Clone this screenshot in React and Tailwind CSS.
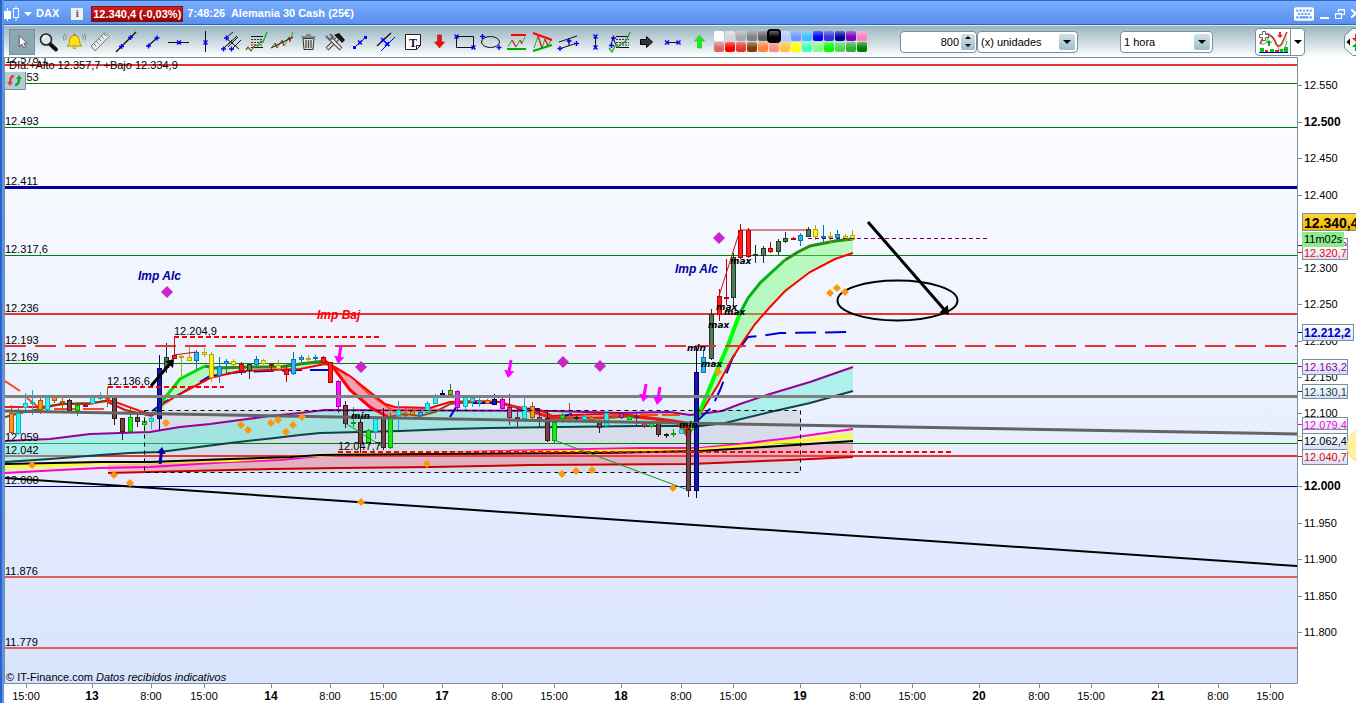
import { FaKeyboard } from 'react-icons/fa'

const BLUE = '#0000ff'

// Small blue handle used by most of the drawing tools
function Cross({ x, y, plus }) {
  return (
    <path
      d={plus ? `M${x - 2.5} ${y}h5M${x} ${y - 2.5}v5` : `M${x - 2} ${y - 2}l4 4M${x + 2} ${y - 2}l-4 4`}
      stroke={BLUE}
      strokeWidth="1.4"
    />
  )
}

const tools = [
  {
    name: 'Seleccionar',
    active: true,
    icon: <path d="M10 6v12l3-2.500 2 4 2-1-2-4h3.500z" fill="#fff" stroke="#555" />,
  },
  {
    name: 'Zoom',
    icon: (
      <>
        <path d="M15 15l6 5.500" stroke="#111" strokeWidth="4" strokeLinecap="round" />
        <circle cx="11" cy="10.500" r="5.500" fill="#dde5ea" stroke="#222" strokeWidth="1.600" />
        <path d="M8 10a3.500 3.500 0 0 1 3-3" stroke="#fff" strokeWidth="1.500" />
      </>
    ),
  },
  {
    name: 'Alerta',
    icon: (
      <>
        <path d="M6 17c3-2 2-5 3-7.500 1-2.500 3-3 4.500-3s3.500.500 4.500 3c1 2.500 0 5.500 3 7.500z" fill="#ffe11a" stroke="#a98a00" />
        <path d="M11 18.500h5l-2.500 2z" fill="#caa500" />
        <path d="M13.500 6.500v-2" stroke="#a98a00" strokeWidth="2" />
        <path d="M6 5.500q-2 2-1 5M4 4.500q-3 3-1 7M21 5.500q2 2 1 5M23 4.500q3 3 1 7" stroke="#777" strokeWidth=".8" />
      </>
    ),
  },
  {
    name: 'Regla',
    icon: (
      <>
        <path d="M4 17L18 3.500l4 4L8 22z" fill="#e8e8e8" stroke="#777" />
        <path d="M7 15l2 2M9.500 12.500l2 2M12 10l2 2M14.500 7.500l2 2M17 5l2 2" stroke="#666" />
      </>
    ),
  },
  {
    name: 'Línea de tendencia',
    icon: <><path d="M3 23L23 3" stroke="#111" strokeWidth="1.400" /><Cross x={8.5} y={17.5} plus /><Cross x={17.5} y={8.5} plus /></>,
  },
  {
    name: 'Segmento',
    icon: <><path d="M9 17l9-8" stroke="#111" strokeWidth="1.400" /><Cross x={9.5} y={17} plus /><Cross x={18} y={9} plus /></>,
  },
  {
    name: 'Línea horizontal',
    icon: <><path d="M3 13.500h21" stroke="#111" /><Cross x={14} y={13.5} /></>,
  },
  {
    name: 'Línea vertical',
    icon: <><path d="M14.500 2v21" stroke="#111" /><Cross x={14.5} y={13.5} /></>,
  },
  {
    name: 'Tridente',
    icon: (
      <>
        <path d="M6 20l9-9M9 9l13 11M15 20L24 11M11 18L21 8M9 9l7-6M6 20L20 7" stroke="#111" />
        <Cross x={6.5} y={20} plus /><Cross x={14.5} y={20} plus /><Cross x={9.5} y={9} plus />
      </>
    ),
  },
  {
    name: 'Retrocesos',
    icon: (
      <>
        <path d="M8 7.500h12M8 18.500h12" stroke="#111" />
        <path d="M8 10.500h12M8 13.500h12M8 16h12" stroke="#333" strokeDasharray="2 1" />
        <path d="M3 21l2-3 3 4 4-6 3 1 3-5 2 1 4-10" stroke="#22a522" strokeWidth="1.300" />
        <path d="M3 21l2-3 3 4M10 19l3-4" stroke="#e22" />
      </>
    ),
  },
  {
    name: 'Regresión',
    icon: (
      <>
        <path d="M3 18l3-4 2 5 5-8 2 6 5-9 1 4 3-9" stroke="#22a522" />
        <path d="M6 14l2 5M13 11l2 6M20 8l1 5" stroke="#e22" strokeWidth="1.300" />
        <path d="M2 19L24 8" stroke="#111" />
      </>
    ),
  },
  {
    name: 'Borrar',
    icon: (
      <>
        <path d="M8 9.500h11l-1 11h-9z" fill="#ddd" stroke="#333" />
        <path d="M6.500 8h14M11 6h5M11 11v8M13.500 11v8M16 11v8" stroke="#444" strokeWidth="1.200" />
      </>
    ),
  },
  {
    name: 'Herramientas',
    icon: (
      <>
        <path d="M6 20l11-11" stroke="#444" strokeWidth="4" />
        <path d="M6.500 19.500l10-10" stroke="#e6e6e6" strokeWidth="2" />
        <path d="M9 9l11 11" stroke="#444" strokeWidth="4" />
        <path d="M9 9l10.500 10.500" stroke="#f4f4f4" strokeWidth="2" />
        <path d="M5 7l4 4 3-3-3-3" stroke="#666" strokeWidth="2" />
        <path d="M13 6l5-2 6 7-3 3-4-5z" fill="#111" />
      </>
    ),
  },
  {
    name: 'Puntos',
    icon: (
      <>
        <path d="M8 18L19 8" stroke="#111" />
        <path d="M6 17h3v3H6zM17 7h3v3h-3z" fill={BLUE} />
        <Cross x={13} y={13.5} />
      </>
    ),
  },
  {
    name: 'Paralelas',
    icon: (
      <>
        <path d="M4 17L18 4" stroke="#111" strokeWidth="1.300" />
        <path d="M8 22L22 8M9 10l8 7" stroke={BLUE} />
        <Cross x={10} y={11} /><Cross x={14} y={15} />
      </>
    ),
  },
  {
    name: 'Texto',
    icon: (
      <>
        <path d="M6.500 5.500h15v11l-4 4h-11z" fill="#fff" stroke="#222" />
        <path d="M21.500 16.500h-4v4" stroke="#222" />
        <text x="14" y="18" textAnchor="middle" fontSize="12" fontWeight="bold" fontFamily="Liberation Serif, serif" fill="#111">T</text>
      </>
    ),
  },
  { name: 'Flecha roja', icon: <path d="M12.500 6h4v7h3l-5 6-5-6h3z" fill="#ef1010" stroke="#b00" strokeWidth=".6" /> },
  {
    name: 'Rectángulo',
    icon: <><path d="M5.500 7.500h17v11h-17z" stroke="#111" /><Cross x={5.5} y={7.5} /><Cross x={22.5} y={18.5} /></>,
  },
  {
    name: 'Elipse',
    icon: <><ellipse cx="13.500" cy="13" rx="9" ry="5.500" stroke="#111" /><Cross x={5.5} y={7.5} plus /><Cross x={22} y={18.5} plus /></>,
  },
  {
    name: 'Soporte y resistencia',
    icon: (
      <>
        <path d="M5 18l4-7 4 7 4-7 2 3 3-6" stroke="#2a2" />
        <path d="M9 11l4 7M17 11l2 4" stroke="#e22" strokeWidth="1.400" />
        <path d="M8 6h15" stroke="#f00" strokeWidth="2" />
        <path d="M4 20h19" stroke="#0a0" strokeWidth="2" />
      </>
    ),
  },
  {
    name: 'Triángulo',
    icon: (
      <>
        <path d="M5 19l4-12 4 12 3-9 3 7 3-6" stroke="#2a2" />
        <path d="M9 7l4 12M16 10l3 7" stroke="#e22" strokeWidth="1.400" />
        <path d="M4 4l19 7" stroke="#f00" strokeWidth="2" />
        <path d="M4 22l19-6" stroke="#0a0" strokeWidth="2" />
      </>
    ),
  },
  {
    name: 'Canal',
    icon: (
      <>
        <path d="M4 13l18-6M4 20l18-6M14 10v7" stroke="#111" />
        <Cross x={5} y={19.5} plus /><Cross x={14} y={12} plus /><Cross x={21.5} y={14.5} plus />
      </>
    ),
  },
  {
    name: 'Medida vertical',
    icon: <><path d="M14.500 7v12" stroke="#111" /><Cross x={14.5} y={7.5} /><Cross x={14.5} y={18.5} /></>,
  },
  {
    name: 'Proyección',
    icon: (
      <>
        <path d="M9 7.500h13M9 18.500h13" stroke="#111" />
        <path d="M9 10.500h13M9 13.500h13M9 16h13" stroke="#333" strokeDasharray="2 1" />
        <path d="M2 19l3 4 3-6 3 1 3-3 3-1 3-4 3-7" stroke="#22a522" strokeWidth="1.300" />
        <path d="M4 16l2-7 3 7" stroke="#111" />
        <Cross x={4.5} y={16.5} plus /><Cross x={6.5} y={9} plus />
      </>
    ),
  },
  { name: 'Flecha', icon: <path d="M7.500 10.500h6v-3l6 5.500-6 5.500v-3h-6z" fill="#333" stroke="#000" /> },
  {
    name: 'Medida horizontal',
    icon: <><path d="M8 13.500h12" stroke="#111" /><Cross x={8} y={13.5} /><Cross x={19.5} y={13.5} /></>,
  },
  { name: 'Flecha verde', icon: <path d="M12.500 19h4v-7h3l-5-6-5 6h3z" fill="#22e622" stroke="#1c1" strokeWidth=".6" /> },
]

const palette = [
  '#ffffff', '#d4d4d4', '#a8a8a8', '#808080', '#606060', '#000000', '#b4c8ff',
  '#6699ff', '#40bfff', '#0000ff', '#3333d9', '#0000a0', '#8000c0', '#ff80c0',
  '#e06666', '#ff0000', '#e63333', '#804000', '#ff8040', '#ff8f80', '#ffbf40',
  '#ffff00', '#40ffc0', '#80ff80', '#00ff00', '#50d850', '#30b030', '#008000',
]

// fill, outline
const inks = {
  o: ['#ff9320', '#a85a00'],
  c: ['#28f4f4', '#12b5b8'],
  k: ['#6e4646', '#3a1418'],
  g: ['#16ee16', '#0a9a0a'],
  G: ['#56785a', '#1c3a20'],
  n: ['#1818a8', '#000060'],
  r: ['#ff1e1e', '#b80000'],
  y: ['#fff01e', '#b8a800'],
  b: ['#30b4ee', '#0878a8'],
  m: ['#ff14ff', '#b400b4'],
  p: ['#c83c82', '#781848'],
  v: ['#8cb43c', '#486e14'],
}

// x, high, body top, body bottom, low, ink
const candles = [
  [11, 405, 413, 432, 434, 'o'], [18, 408, 413, 433, 435, 'c'], [25, 393, 403, 407, 410, 'c'],
  [32, 390, 402, 403, 415, 'c'], [40, 397, 400, 409, 414, 'o'], [47, 397, 397, 409, 412, 'c'],
  [54, 396, 397, 400, 403, 'o'], [62, 397, 401, 402, 411, 'o'], [69, 399, 400, 410, 413, 'k'],
  [77, 402, 405, 410, 416, 'g'], [85, 403, 405, 406, 407, 'p'], [92, 396, 397, 403, 405, 'c'],
  [100, 392, 397, 398, 400, 'c'], [107, 387, 397, 398, 407, 'o'], [114, 396, 397, 418, 425, 'k'],
  [122, 418, 418, 431, 440, 'k'], [130, 408, 417, 431, 433, 'g'], [137, 413, 417, 421, 427, 'k'],
  [144, 417, 421, 424, 433, 'g'], [151, 416, 418, 421, 429, 'c'], [159, 355, 368, 418, 430, 'n'],
  [166, 343, 357, 367, 373, 'G'], [174, 337, 355, 358, 359, 'r'], [181, 355, 356, 357, 376, 'y'],
  [189, 347, 357, 360, 361, 'y'], [196, 350, 352, 360, 370, 'b'], [204, 348, 352, 354, 357, 'y'],
  [211, 352, 354, 377, 382, 'y'], [219, 357, 366, 375, 383, 'b'], [226, 359, 361, 363, 373, 'b'],
  [233, 359, 361, 364, 366, 'y'], [241, 362, 364, 370, 375, 'r'], [249, 364, 364, 370, 379, 'G'],
  [256, 356, 359, 364, 366, 'b'], [263, 359, 360, 363, 365, 'y'], [271, 363, 364, 365, 372, 'r'],
  [278, 360, 365, 368, 370, 'y'], [286, 365, 369, 374, 382, 'r'], [293, 352, 359, 373, 375, 'b'],
  [301, 355, 357, 359, 362, 'b'], [308, 355, 358, 359, 361, 'y'], [315, 355, 357, 358, 361, 'b'],
  [323, 356, 357, 362, 363, 'r'], [330, 362, 362, 382, 383, 'r'], [338, 380, 381, 406, 413, 'm'],
  [345, 401, 405, 423, 428, 'k'], [353, 407, 422, 423, 427, 'g'], [360, 418, 422, 443, 453, 'k'],
  [368, 429, 430, 443, 445, 'g'], [375, 417, 418, 431, 439, 'c'], [383, 408, 417, 447, 450, 'k'],
  [390, 413, 417, 447, 449, 'g'], [398, 401, 410, 415, 430, 'c'], [405, 408, 414, 415, 418, 'o'],
  [412, 406, 411, 414, 416, 'o'], [420, 409, 412, 415, 416, 'b'], [427, 401, 403, 412, 414, 'c'],
  [435, 394, 397, 403, 404, 'c'], [442, 390, 393, 394, 397, 'n'], [450, 384, 390, 394, 396, 'v'],
  [457, 390, 391, 407, 410, 'm'], [465, 395, 397, 406, 412, 'c'], [472, 396, 398, 401, 407, 'c'],
  [479, 398, 401, 402, 407, 'c'], [487, 399, 400, 403, 404, 'o'], [494, 394, 399, 404, 405, 'n'],
  [502, 397, 399, 408, 410, 'm'], [509, 394, 407, 417, 425, 'p'], [517, 408, 417, 418, 428, 'p'],
  [524, 397, 406, 418, 419, 'c'], [532, 402, 406, 417, 420, 'o'], [539, 408, 417, 419, 427, 'p'],
  [547, 410, 418, 440, 442, 'k'], [554, 420, 422, 440, 444, 'g'], [562, 413, 415, 418, 423, 'g'],
  [569, 403, 417, 418, 423, 'o'], [576, 416, 417, 418, 420, 'k'], [584, 414, 416, 419, 420, 'c'],
  [591, 416, 417, 419, 420, 'o'], [599, 420, 422, 427, 433, 'k'], [606, 411, 413, 425, 427, 'c'],
  [614, 414, 416, 417, 419, 'o'], [621, 412, 413, 417, 419, 'p'], [629, 414, 416, 419, 420, 'g'],
  [636, 413, 416, 417, 427, 'p'], [644, 422, 423, 426, 428, 'p'], [651, 422, 423, 426, 428, 'g'],
  [658, 422, 423, 434, 437, 'k'], [666, 433, 434, 435, 438, 'k'], [673, 429, 433, 434, 437, 'g'],
  [681, 428, 429, 433, 434, 'c'], [688, 428, 429, 490, 497, 'k'], [696, 347, 372, 490, 498, 'n'],
  [703, 350, 357, 372, 373, 'b'], [711, 309, 314, 358, 360, 'G'], [719, 289, 296, 314, 321, 'r'],
  [726, 259, 297, 298, 305, 'r'], [733, 253, 257, 297, 307, 'G'], [740, 224, 230, 257, 259, 'r'],
  [748, 228, 230, 256, 258, 'r'], [755, 245, 254, 255, 263, 'G'], [763, 246, 248, 255, 263, 'G'],
  [770, 242, 248, 251, 253, 'r'], [778, 239, 241, 251, 255, 'G'], [785, 232, 238, 241, 243, 'G'],
  [793, 237, 238, 239, 240, 'r'], [800, 233, 235, 240, 246, 'b'], [808, 227, 229, 236, 237, 'G'],
  [815, 225, 229, 236, 240, 'y'], [823, 225, 236, 237, 242, 'b'], [830, 232, 236, 237, 243, 'y'],
  [837, 230, 234, 237, 240, 'b'], [845, 234, 236, 238, 241, 'y'], [852, 230, 235, 239, 241, 'y'],
]

// y, color, width, label, label baseline
const levels = [
  [65, '#e63333', 2, '12.578,1', 63],
  [83, '#008000', 1, '12.553', 81],
  [127, '#008000', 1, '12.493', 125],
  [187, '#0000a0', 3, '12.411', 185],
  [255, '#008000', 1, '12.317,6', 253],
  [314, '#e63333', 2, '12.236', 312],
  [363, '#008000', 1, '12.169', 361],
  [443, '#008000', 1, '12.059', 441],
  [456, '#e63333', 2, '12.042', 454],
  [486, '#0000a0', 1, '12.000', 484],
  [577, '#e06060', 2, '11.876', 575],
  [648, '#e06060', 2, '11.779', 646],
]

const priceTicks = [
  [85, '12.550'], [122, '12.500', true], [158, '12.450'], [195, '12.400'], [268, '12.300'],
  [304, '12.250'], [341, '12.200'], [377, '12.150'], [413, '12.100'], [486, '12.000', true],
  [523, '11.950'], [559, '11.900'], [596, '11.850'], [632, '11.800'],
]

const timeTicks = [
  [26, '15:00'], [92, '13', true], [151, '8:00'], [204, '15:00'], [271, '14', true], [330, '8:00'],
  [383, '15:00'], [442, '17', true], [502, '8:00'], [554, '15:00'], [621, '18', true], [681, '8:00'],
  [733, '15:00'], [800, '19', true], [860, '8:00'], [912, '15:00'], [979, '20', true], [1039, '8:00'],
  [1091, '15:00'], [1158, '21', true], [1218, '8:00'], [1270, '15:00'],
]

// y, height, width, text, color, background
const priceTags = [
  [238, 16, 45, '12.340,0', '#660066', 'url(#tag)'],
  [245, 14, 45, '12.320,7', '#ff0000', 'url(#tag)'],
  [359, 15, 45, '12.163,2', '#990099', 'url(#tag)'],
  [384, 14, 45, '12.130,1', '#1e4646', 'url(#tag)'],
  [417, 15, 45, '12.079,4', '#ff00dc', 'url(#tag)'],
  [429, 15, 45, '12.067,0', '#e6e600', 'url(#tag)'],
  [433, 16, 45, '12.062,4', '#000000', 'url(#tag)'],
  [449, 15, 45, '12.040,7', '#e60000', 'url(#tag)'],
]

const purpleDiamonds = [[167, 292], [361, 367], [563, 362], [600, 366], [719, 238]]

const orangeDiamonds = [
  [32, 465], [114, 475], [130, 483], [166, 423], [241, 425], [248, 430], [271, 423], [278, 420],
  [286, 432], [293, 425], [302, 417], [361, 502], [427, 464], [562, 474], [576, 471], [592, 470],
  [673, 488], [718, 372], [830, 293], [837, 288], [845, 292],
]

const marks = [
  [730, 264, 'max'], [716, 310, 'max'], [724, 315, 'max'], [708, 328, 'max'], [701, 367, 'max'],
  [687, 351, 'min'], [679, 428, 'min'], [351, 419, 'min'],
]

const purple = '5,441 50,439 90,434 150,432 180,427 210,424 240,420 270,416 300,413 325,410 555,411 620,413 670,412 690,415 700,414 722,411 740,404 770,394 810,382 853,367'
const teal = '5,462 50,459 100,455 130,453 160,452 230,443 275,438 300,435 320,433 400,431 450,429 490,428 560,427 640,426 700,426 725,423 770,412 810,403 853,391'
const tealBack = '853,391 810,403 770,412 725,423 700,426 640,426 560,427 490,428 450,429 400,431 320,433 300,435 275,438 230,443 160,452 130,453 100,455 50,459 5,462'
const magenta = '5,473 60,470 100,468 150,467 230,462 280,460 330,455 430,453 500,451 640,448 700,448 740,444 790,438 853,429'
const yellow = '5,467 50,465 100,463 230,461 290,457 360,454 500,452 640,450 690,450 760,444 810,440 853,436'
const black = '5,464 100,462 150,462 230,459 290,457 320,455 430,454 600,453 700,451 780,446 853,441'
const blackBack = '853,441 780,446 700,451 600,453 430,454 320,455 290,457 230,459 150,462 100,462 5,464'
const lowRed = '108,473 230,470 270,469 340,468 430,467 530,465 690,464 740,462 790,460 853,457'

function Diamond({ x, y, r, fill }) {
  return <path d={`M${x} ${y - r}l${r} ${r}l${-r} ${r}l${-r} ${-r}z`} fill={fill} />
}

function Arrow({ x1, y1, x2, y2, color, width = 3, head = 7 }) {
  const a = Math.atan2(y2 - y1, x2 - x1)
  const side = turn => `${x2 - head * Math.cos(a + turn)},${y2 - head * Math.sin(a + turn)}`
  return (
    <g>
      <line x1={x1} y1={y1} x2={x2 - 3 * Math.cos(a)} y2={y2 - 3 * Math.sin(a)} stroke={color} strokeWidth={width} />
      <polygon points={`${x2},${y2} ${side(0.6)} ${side(-0.6)}`} fill={color} />
    </g>
  )
}

function Candle({ x, high, top, bottom, low, ink }) {
  const [fill, line] = inks[ink]
  return (
    <g shapeRendering="crispEdges">
      <rect x={x} y={high} width="1" height={low - high} fill={line} />
      <rect x={x - 2} y={top} width="5" height={bottom - top + 1} fill={line} />
      {bottom - top > 1 && <rect x={x - 1} y={top + 1} width="3" height={bottom - top - 1} fill={fill} />}
    </g>
  )
}

function Indicators() {
  return (
    <g fill="none" strokeWidth="2">
      <polygon points={`${purple} ${tealBack}`} fill="#50f0d2" fillOpacity=".38" />
      <polygon points={`${magenta} ${blackBack}`} fill="#f5f03c" fillOpacity=".4" />
      <polygon points={`${lowRed} ${blackBack.replace('100,462 5,464', '108,465')}`} fill="#ff5064" fillOpacity=".3" />
      <polyline points={teal} stroke="#0a4646" />
      <polyline points={purple} stroke="#960096" />
      <polyline points={magenta} stroke="#ff00d2" />
      <polyline points={yellow} stroke="#ffff00" />
      <polyline points={black} stroke="#000" />
      <polyline points={lowRed} stroke="#c80000" />

      {/* fast average channel */}
      <polygon points="155,415 163,400 180,379 205,366 215,369 250,367 280,367 325,361 333,367 325,364 300,369 240,371 210,379 180,394" fill="#64ff64" fillOpacity=".4" />
      <polygon points="333,366 350,376 385,403 395,408 440,408 385,416 370,407 350,390" fill="#ff5078" fillOpacity=".5" />
      <polygon points="692,425 718,368 740,313 760,283 785,260 810,246 835,241 853,239 853,253 835,259 810,272 770,307 740,346 718,385" fill="#64ff64" fillOpacity=".4" />
      <polyline points="5,381 20,391" stroke="#ff4614" />
      <polyline points="27,398 38,407" stroke="#ff4614" />
      <path d="M54 409h21M83 409h21M334 367l14 9M356 382l13 12 26 18" stroke="#ff4614" />
      <polyline points="5,407 40,407 65,404 90,404 108,400 118,403 140,411 152,414" stroke="#ff1414" />
      <polyline points="108,402 125,410 152,416" stroke="#c81414" />
      <polyline points="5,417 20,413 40,409 60,404 90,403 108,401" stroke="#823c14" />
      <polyline points="152,411 163,403 180,394 210,376 240,372 300,370 328,370" stroke="#0000d2" strokeDasharray="20 8" />
      <polyline points="152,416 163,404 180,394 210,378 240,371 300,369 325,364 333,366 350,376 385,404 395,407 430,408 450,402 475,401 500,402 515,407 540,410 552,416 600,414 630,415 670,420 690,423" stroke="#ff0000" />
      <polyline points="155,414 163,400 180,379 205,366" stroke="#00dc00" strokeWidth="3" />
      <polyline points="205,366 215,368 250,367 280,367 300,364 325,361" stroke="#288c14" strokeWidth="3" />
      <polyline points="325,361 333,367 350,390 370,407 388,417" stroke="#ff0000" strokeWidth="3" />
      <polyline points="388,417 405,414 420,416 435,412 450,404 475,402" stroke="#965014" />
      <path d="M450 417L458 404M472 403h22M517 409h22M560 417l12-3" stroke="#0000d2" />
      <polyline points="500,403 520,408 540,414 552,418 600,418 625,416 655,419 678,423 688,436" stroke="#e61e14" strokeWidth="3" />
      <path d="M603 415h20M640 415h18M662 415h18" stroke="#ff4614" />
      <polygon points="681,426 694,426 688,441" fill="#f03214" />
      <polyline points="695,423 712,407 720,390 733,357 748,337 760,336 780,333 853,332" stroke="#0000d2" strokeDasharray="21 9" />
      <polyline points="692,427 700,414 718,385 730,362 740,346 755,324 770,307 785,291 810,272 835,259 853,253" stroke="#ff0000" />
      <polyline points="692,430 703,404 718,368 728,345 740,313" stroke="#00ff00" strokeWidth="4" />
      <polyline points="739,315 748,298 760,283 785,260" stroke="#00b414" strokeWidth="3" />
      <polyline points="785,260 798,252 810,246 835,241 853,239" stroke="#288c14" strokeWidth="3" />
    </g>
  )
}

function Plot() {
  return (
    <g clipPath="url(#plot)">
      <rect x="5" y="58" width="1292" height="625" fill="url(#sky)" />
      <rect x="144" y="410" width="656" height="62" fill="#808080" fillOpacity=".16" />
      {levels.map(([y, color, width]) => (
        <rect key={y} x="5" y={width > 1 ? y - 1 : y} width="1292" height={width} fill={color} />
      ))}
      <Indicators />
      {candles.map(([x, high, top, bottom, low, ink]) => (
        <Candle key={x} x={x} high={high} top={top} bottom={bottom} low={low} ink={ink} />
      ))}

      <g fill="none">
        <path d="M5 346h1292" stroke="#e63333" strokeWidth="2" strokeDasharray="21 9" />
        <path d="M174 337h206M108 387h116M338 452h615" stroke="#ff0000" strokeWidth="2" strokeDasharray="5 3" />
        <path d="M174.500 337v18M174 355l22-3M719 296l21-66h68" stroke="#be1414" />
        <path d="M345 423l38 24M554 440l134 50" stroke="#149614" />
        <path d="M144.500 410.500h656v62h-656z" stroke="#000" strokeDasharray="4 4" />
        <path d="M808 238.500h179" stroke="#660066" strokeDasharray="4 3" />
        <path d="M5 396.500h1292" stroke="#808080" strokeWidth="3" />
        <path d="M5 411l1292 23" stroke="#646464" strokeWidth="3" />
        <path d="M5 478l1292 88" stroke="#000" strokeWidth="2" />
        <ellipse cx="897.500" cy="300.500" rx="60" ry="20" stroke="#000" strokeWidth="2" />
      </g>

      {purpleDiamonds.map(([x, y]) => <Diamond key={x} x={x} y={y} r={6} fill="#c828c8" />)}
      {orangeDiamonds.map(([x, y]) => <Diamond key={x} x={x} y={y} r={4} fill="#ff960a" />)}

      <Arrow x1={868} y1={222} x2={949} y2={315} color="#000" head={10} />
      <Arrow x1={151} y1={386} x2={174} y2={359} color="#000" head={9} />
      <Arrow x1={160} y1={464} x2={162} y2={447} color="#0000a0" head={8} />
      <Arrow x1={341} y1={346} x2={338} y2={364} color="#ff00ff" head={9} />
      <Arrow x1={511} y1={360} x2={508} y2={378} color="#ff00ff" head={9} />
      <Arrow x1={646} y1={384} x2={643} y2={402} color="#ff00ff" head={9} />
      <Arrow x1={660} y1={387} x2={657} y2={405} color="#ff00ff" head={9} />

      {levels.map(([, , , label, y]) => <text key={label} x="5" y={y}>{label}</text>)}
      <text x="5" y="344">12.193</text>
      <text x="174" y="335">12.204,9</text>
      <text x="107" y="385">12.136,6</text>
      <text x="338" y="450">12.047,7</text>
      <text x="9" y="69">Día:+Alto 12.357,7 +Bajo 12.334,9</text>
      <text x="6" y="681">© IT-Finance.com</text>
      <text x="96" y="681" fontStyle="italic">Datos recibidos indicativos</text>
      <g fontSize="12" fontWeight="bold" fontStyle="italic">
        <text x="138" y="280" fill="#0000a0">Imp Alc</text>
        <text x="675" y="273" fill="#0000a0">Imp Alc</text>
        <text x="317" y="319" fill="#ff0000">Imp Baj</text>
      </g>
      <g fontSize="9" fontWeight="bold" fontStyle="italic" fontFamily="DejaVu Sans, sans-serif">
        {marks.map(([x, y, text]) => <text key={`${x}-${y}`} x={x} y={y}>{text}</text>)}
      </g>

      {/* refresh button in the corner */}
      <rect x="5" y="72" width="21" height="18" fill="#b4ccd6" />
      <path d="M5 89.500h20.500V72" stroke="#78909c" fill="none" />
      <path d="M14 76q-4 0-4 7" stroke="#e63c3c" strokeWidth="2.500" fill="none" />
      <path d="M7 82h6l-3 4z" fill="#e63c3c" />
      <path d="M15 85q4 0 4-6" stroke="#14a032" strokeWidth="2.500" fill="none" />
      <path d="M16 79h6l-3-4z" fill="#14a032" />
    </g>
  )
}

function Axes() {
  return (
    <g>
      <path d="M4.500 57.500v626M4 57.500h1293.500v626M4 683.500h1293" stroke="#78909c" fill="none" />
      {timeTicks.map(([x, label, bold]) => (
        <g key={x}>
          <rect x={x} y="684" width="1" height="4" fill="#78909c" />
          <text x={x} y="700" textAnchor="middle" fontSize={bold ? 12 : 11} fontWeight={bold ? 'bold' : 'normal'}>{label}</text>
        </g>
      ))}
      {priceTicks.map(([y, label, bold]) => (
        <g key={y}>
          <rect x="1298" y={y} width="4" height="1" fill="#78909c" />
          <text x="1304" y={y + 4} fontSize={bold ? 12 : 11} fontWeight={bold ? 'bold' : 'normal'}>{label}</text>
        </g>
      ))}
      {priceTags.map(([y, h, w, label, color, bg]) => (
        <g key={label}>
          <rect x="1298" y={y + 7} width="4" height="1" fill={color} />
          <rect x="1302.500" y={y + 0.5} width={w} height={h} fill={bg} stroke="#78909c" />
          <text x="1304" y={y + 12} fill={color}>{label}</text>
        </g>
      ))}
      <rect x="1298" y="332" width="4" height="1" fill="#0000d2" />
      <rect x="1302.500" y="324.500" width="51" height="16" fill="url(#tag)" stroke="#78909c" />
      <text x="1304" y="337" fontSize="12" fontWeight="bold" fill="#0000c8">12.212,2</text>
      <rect x="1302" y="232" width="42" height="15" fill="#8ceb8c" />
      <text x="1304" y="243">11m02s</text>
      <rect x="1302.500" y="213.500" width="60" height="17" fill="url(#gold)" stroke="#78909c" />
      <text x="1304" y="228" fontSize="14" fontWeight="bold">12.340,4</text>
      <circle cx="1364" cy="446" r="17" fill="#fff0a0" stroke="#f0dc8c" />
    </g>
  )
}

function Chart() {
  return (
    <svg viewBox="4 57 1352 646" className="block w-full" fontFamily="Liberation Sans, Arial, sans-serif" fontSize="11" role="img" aria-label="DAX 1 hora">
      <defs>
        <clipPath id="plot"><rect x="5" y="58" width="1292" height="625" /></clipPath>
        <linearGradient id="sky" x2="0" y2="1">
          <stop offset="0" stopColor="#ffffff" />
          <stop offset="1" stopColor="#d8e3fd" />
        </linearGradient>
        <linearGradient id="tag" x2="0" y2="1">
          <stop offset="0" stopColor="#ffffff" />
          <stop offset="1" stopColor="#d2dff8" />
        </linearGradient>
        <linearGradient id="gold" x2="0" y2="1">
          <stop offset="0" stopColor="#ffd738" />
          <stop offset="1" stopColor="#f5b400" />
        </linearGradient>
      </defs>
      <Plot />
      <Axes />
    </svg>
  )
}

function TitleBar() {
  return (
    <header className="flex h-[25px] items-center border-y border-[#2d64c3] bg-linear-to-b from-[#78afff] to-[#5a8fec] pt-0.5 text-[11px] font-bold text-white">
      <svg width="16" height="16" viewBox="0 0 16 16" fill="none" className="shrink-0">
        <path d="M0 5h7v8H0zM3 2h1v13H3z" fill="#fff" />
        <path d="M9.500 2.500h5v9h-5zM12 0v2M12 12v3" stroke="#fff" />
      </svg>
      <button aria-label="Menú" className="ml-1 h-0 w-0 border-x-4 border-t-4 border-x-transparent border-t-white" />
      <h1 className="ml-1">DAX</h1>
      <button aria-label="Información" className="ml-3 flex h-3 w-3 items-center justify-center bg-[#f0f0f0] font-['Liberation_Serif',serif] text-[#555]">i</button>
      <span className="ml-2 border border-[#7a1414] bg-linear-to-b from-[#d21e1e] to-[#960000] px-px leading-[14px]">12.340,4 (-0,03%)</span>
      <span className="ml-1">7:48:26&nbsp; Alemania 30 Cash (25€)</span>
      <div className="ml-auto flex items-center gap-1.5 overflow-hidden">
        <button aria-label="Teclado"><FaKeyboard size={20} /></button>
        <button aria-label="Minimizar" className="mt-2 h-0.5 w-[9px] bg-white" />
        <button aria-label="Restaurar">
          <svg width="10" height="10" viewBox="0 0 10 10" fill="none" stroke="#fff">
            <path d="M3.500 3V.5h6v5H7M3 1h7" strokeWidth="1.200" />
            <path d="M.5 4.500h6v5h-6zM0 5h7" strokeWidth="1.200" />
          </svg>
        </button>
        <button aria-label="Cerrar" className="w-[5px] overflow-hidden">
          <svg width="9" height="9" viewBox="0 0 9 9" className="max-w-none"><path d="M0 0l9 9M9 0L0 9" stroke="#fff" strokeWidth="2" /></svg>
        </button>
      </div>
    </header>
  )
}

function Dropdown({ label, value, className }) {
  return (
    <div className={`relative flex h-[22px] shrink-0 rounded-sm border border-[#78909c] bg-white ${className}`}>
      <select aria-label={label} defaultValue={value} className="block h-5 w-full appearance-none bg-transparent py-0 pl-[3px] text-[11px] leading-5 outline-none">
        <option>{value}</option>
      </select>
      <span className="pointer-events-none absolute top-0.5 right-0.5 flex h-4 w-4 items-center justify-center rounded-xs bg-linear-to-b from-[#cfe2ea] to-[#9dbdca]">
        <span className="border-x-4 border-t-4 border-x-transparent border-t-black" />
      </span>
    </div>
  )
}

function Toolbar() {
  return (
    <div className="flex h-8 items-center overflow-hidden border-t border-[#dce9f5] bg-linear-to-b from-[#98b5c0] to-white pl-[5px]">
      {tools.map(tool => (
        <button
          key={tool.name}
          title={tool.name}
          aria-label={tool.name}
          className={tool.active ? 'h-[26px] w-[26px] shrink-0 border border-[#7890a0] bg-[#8ea5b2]' : 'h-[26px] w-[26px] shrink-0'}
        >
          <svg viewBox="0 0 26 26" fill="none" className="block h-full w-full">{tool.icon}</svg>
        </button>
      ))}
      <div className="ml-[3px] grid shrink-0 grid-cols-14 gap-px">
        {palette.map(color => (
          <button
            key={color}
            aria-label={color}
            style={{ backgroundColor: color }}
            className={
              color === '#000000'
                ? 'relative z-10 h-2.5 w-2.5 rounded-xs bg-linear-to-b from-white/40 to-transparent to-60% ring-2 ring-black'
                : 'h-2.5 w-2.5 rounded-xs bg-linear-to-b from-white/40 to-transparent to-60%'
            }
          />
        ))}
      </div>
      <div className="ml-[33px] flex h-[22px] w-[77px] shrink-0 items-center rounded-sm border border-[#78909c] bg-white">
        <input aria-label="Número de unidades" defaultValue="800" className="h-5 w-[58px] text-right text-[11px] leading-5 outline-none" />
        <div className="ml-0.5 flex flex-col rounded-xs bg-linear-to-b from-[#cfe2ea] to-[#9dbdca]">
          <button aria-label="Más" className="flex h-2 w-3.5 items-center justify-center">
            <span className="border-x-3 border-b-3 border-x-transparent border-b-black" />
          </button>
          <button aria-label="Menos" className="flex h-2 w-3.5 items-center justify-center">
            <span className="border-x-3 border-t-3 border-x-transparent border-t-black" />
          </button>
        </div>
      </div>
      <Dropdown label="Unidades" value="(x) unidades" className="w-[101px]" />
      <Dropdown label="Periodo" value="1 hora" className="ml-[42px] w-[93px]" />
      <div className="ml-[42px] flex h-7 shrink-0 rounded-sm border border-[#78909c] bg-white">
        <button aria-label="Indicadores" className="w-[35px] border-r border-[#78909c]">
          <svg width="32" height="24" viewBox="0 0 32 24" fill="none" className="mx-auto">
            <path d="M3 15q5-12 10-8t6 9q4 4 7-4l4-8v6l-5 7q-4 3-7-2l-5-8z" fill="#b4e6b4" fillOpacity=".7" />
            <path d="M3 12q4 6 8-3t9 6 10-4" stroke="#3cb450" />
            <path d="M3 14q5-13 10-9t6 9q4 5 7-3l4-9" stroke="#d22828" strokeWidth="1.400" />
            <path d="M5.500 1.500h3v3h3v3h-3v3h-3v-3h-3v-3h3z" fill="#fff" stroke="#666" />
            <path d="M11 16v-3H9l3-3 3 3h-2v3z" fill="#00aa14" />
            <path d="M22 2v3h-2l3 3 3-3h-2V2z" fill="#e61e1e" />
            <path d="M3 18h4v4H3zM13 19h4v3h-4zM23 19h3v3h-3zM27 17h4v5h-4z" fill="#00c814" />
            <path d="M8 20h3v2H8zM18 20h4v2h-4z" fill="#e61e1e" />
            <path d="M2 22.500h29" stroke="#0000c8" />
          </svg>
        </button>
        <button aria-label="Más indicadores" className="flex w-[13px] items-center justify-center">
          <span className="border-x-4 border-t-4 border-x-transparent border-t-black" />
        </button>
      </div>
      <button aria-label="Operar" className="-mr-4 ml-auto shrink-0">
        <svg width="28" height="28" viewBox="0 0 28 28">
          <path d="M.5 8l8-7.500h19v27h-19l-8-7.500z" fill="#f5f7f8" stroke="#78909c" />
          <path d="M6 10.500v7L2.500 14z" fill="#000" />
          <path d="M11 6v4H8l4 4V6z" fill="#e61e1e" />
          <path d="M11 23v-4H8l4-4v8z" fill="#00aa14" />
        </svg>
      </button>
    </div>
  )
}

export default function App() {
  return (
    <main className="overflow-hidden border-l-2 border-[#2d64c3] bg-white font-['Liberation_Sans',Arial,sans-serif] text-black">
      <div className="border-l-2 border-[#5a96f0]">
        <TitleBar />
        <Toolbar />
        <Chart />
      </div>
    </main>
  )
}
